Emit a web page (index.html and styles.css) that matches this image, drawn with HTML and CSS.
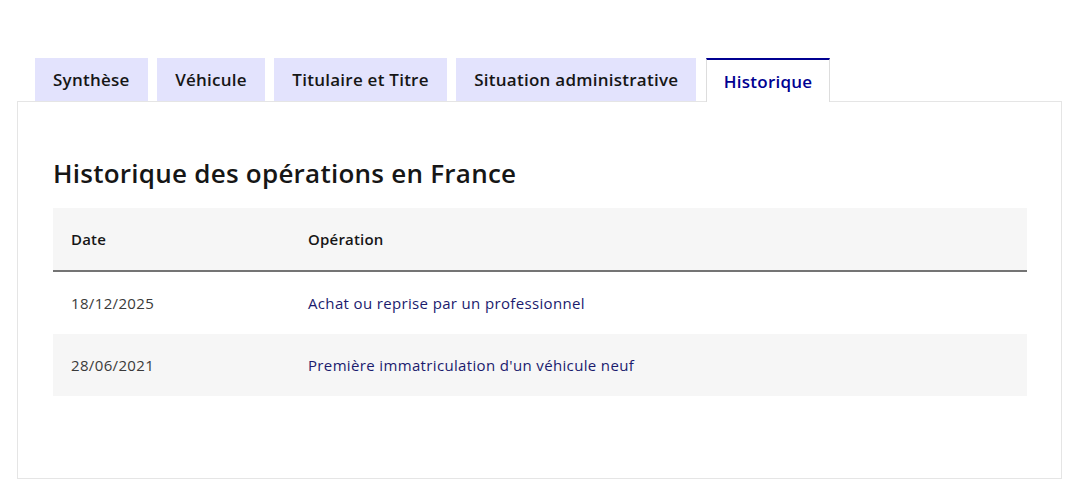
FILE: index.html
```html
<!DOCTYPE html>
<html lang="fr">

<head>
    <meta charset="UTF-8">
    <meta name="viewport" content="width=device-width, initial-scale=1.0">
    <title>Historique</title>
    <link rel="stylesheet" href="styles.css">
</head>

<body>
    <div class="tabs">
        <ul class="tab-list">
            <li class="tab">Synthèse</li>
            <li class="tab">Véhicule</li>
            <li class="tab">Titulaire et Titre</li>
            <li class="tab">Situation administrative</li>
            <li class="tab active">Historique</li>
        </ul>

        <div class="tab-panel">
            <h2>Historique des opérations en France</h2>

            <table class="history-table">
                <thead>
                    <tr>
                        <th class="col-date">Date</th>
                        <th>Opération</th>
                    </tr>
                </thead>
                <tbody>
                    <tr>
                        <td class="date">18/12/2025</td>
                        <td class="operation">Achat ou reprise par un professionnel</td>
                    </tr>
                    <tr>
                        <td class="date">28/06/2021</td>
                        <td class="operation">Première immatriculation d'un véhicule neuf</td>
                    </tr>
                </tbody>
            </table>
        </div>
    </div>
</body>

</html>
```

FILE: styles.css
```css
body {
    margin: 0;
    padding-top: 58px;
    font-family: "Open Sans", "Noto Sans", sans-serif;
    color: #161616;
    background-color: white;
}

.tabs {
    margin: 0 18px 0 17px;
}

.tab-list {
    display: flex;
    gap: 9.5px;
    margin: 0;
    padding: 0 0 0 18px;
    list-style: none;
}

.tab {
    display: flex;
    align-items: center;
    height: 43px;
    padding: 0 18px;
    box-sizing: border-box;
    background-color: #e3e3fd;
    font-size: 17px;
    font-weight: 600;
    letter-spacing: 0.25px;
}

.tab.active {
    position: relative;
    margin-bottom: -1px;
    height: 44px;
    padding: 0 17px;
    background-color: white;
    color: #000091;
    border-top: 2px solid #000091;
    border-left: 1px solid #dddddd;
    border-right: 1px solid #dddddd;
}

.tab-panel {
    height: 378px;
    box-sizing: border-box;
    padding: 53px 34px 0 35px;
    border: 1px solid #e5e5e5;
}

h2 {
    margin: 0 0 17px;
    font-size: 26px;
    line-height: 36px;
    font-weight: 600;
    letter-spacing: 0.25px;
}

.history-table {
    width: 100%;
    border-collapse: collapse;
}

.history-table th {
    height: 62px;
    padding: 0 18px;
    text-align: left;
    font-size: 15px;
    font-weight: 600;
    letter-spacing: 0.2px;
    background-color: #f6f6f6;
    border-bottom: 2px solid #747474;
}

.history-table .col-date {
    width: 201px;
}

.history-table td {
    height: 62px;
    padding: 0 18px;
    font-size: 15px;
    letter-spacing: 0.35px;
}

.history-table tbody tr:nth-child(even) {
    background-color: #f6f6f6;
}

.date {
    color: #3a3a3a;
}

.operation {
    color: #1b1b6e;
}
```
